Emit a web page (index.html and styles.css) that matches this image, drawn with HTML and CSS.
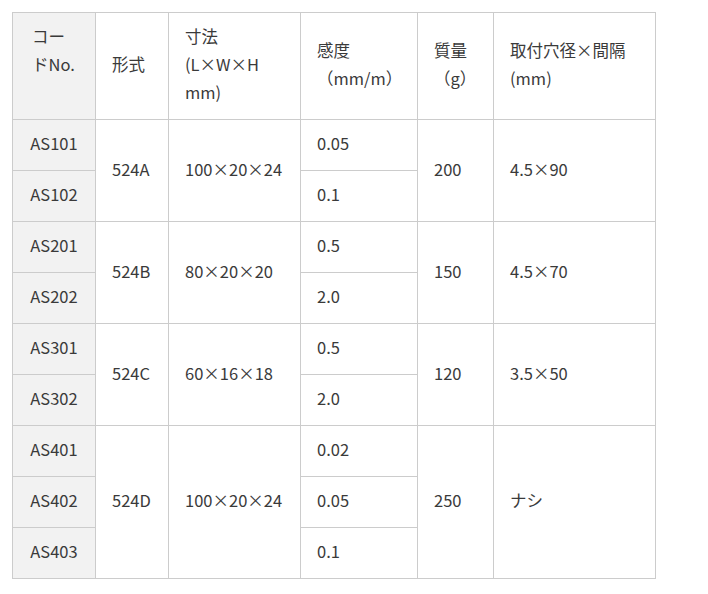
FILE: index.html
```html
<!DOCTYPE html>
<html lang="ja">
<head>
<meta charset="utf-8">
<link rel="stylesheet" href="styles.css">
</head>
<body>
<table class="spec">
  <colgroup>
    <col class="c1"><col class="c2"><col class="c3"><col class="c4"><col class="c5"><col class="c6">
  </colgroup>
  <thead>
    <tr>
      <th class="code head-code">コードNo.</th>
      <th>形式</th>
      <th>寸法<br>(L×W×H mm)</th>
      <th>感度<br>（mm/m）</th>
      <th>質量<br>（g）</th>
      <th>取付穴径×間隔<br>(mm)</th>
    </tr>
  </thead>
  <tbody>
    <tr><td class="code">AS101</td><td rowspan="2">524A</td><td rowspan="2">100×20×24</td><td>0.05</td><td rowspan="2">200</td><td rowspan="2">4.5×90</td></tr>
    <tr><td class="code">AS102</td><td>0.1</td></tr>
    <tr><td class="code">AS201</td><td rowspan="2">524B</td><td rowspan="2">80×20×20</td><td>0.5</td><td rowspan="2">150</td><td rowspan="2">4.5×70</td></tr>
    <tr><td class="code">AS202</td><td>2.0</td></tr>
    <tr><td class="code">AS301</td><td rowspan="2">524C</td><td rowspan="2">60×16×18</td><td>0.5</td><td rowspan="2">120</td><td rowspan="2">3.5×50</td></tr>
    <tr><td class="code">AS302</td><td>2.0</td></tr>
    <tr><td class="code">AS401</td><td rowspan="3">524D</td><td rowspan="3">100×20×24</td><td>0.02</td><td rowspan="3">250</td><td rowspan="3">ナシ</td></tr>
    <tr><td class="code">AS402</td><td>0.05</td></tr>
    <tr><td class="code">AS403</td><td>0.1</td></tr>
  </tbody>
</table>
</body>
</html>
```
FILE: styles.css
```css
html, body {
  margin: 0;
  padding: 0;
  background: #ffffff;
}
body {
  padding: 12px;
  font-family: "Noto Sans CJK JP", "Noto Sans", sans-serif;
  font-size: 16.5px;
  font-weight: 400;
  color: #3a3a3a;
}
.spec {
  border-collapse: collapse;
  table-layout: fixed;
  width: 643px;
}
.c1 { width: 83px; }
.c2 { width: 73px; }
.c3 { width: 132px; }
.c4 { width: 117px; }
.c5 { width: 76px; }
.c6 { width: 162px; }
.spec th,
.spec td {
  border: 1px solid #cccccc;
  padding: 9px 16px 13px;
  line-height: 28px;
  font-weight: 400;
  text-align: left;
  vertical-align: middle;
}
.spec .code {
  background: #f2f2f2;
  text-align: center;
  padding-left: 6px;
  padding-right: 6px;
}
.spec .head-code {
  text-align: left;
  padding-left: 19px;
  padding-right: 14px;
  padding-bottom: 41px;
}
```
